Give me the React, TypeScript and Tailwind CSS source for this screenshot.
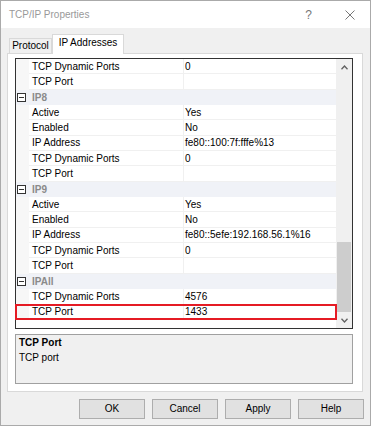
import React from "react";

type Row =
  | { kind: "cat"; label: string }
  | { kind: "prop"; name: string; value: string; marked?: boolean };

const rows: Row[] = [
  { kind: "prop", name: "TCP Dynamic Ports", value: "0" },
  { kind: "prop", name: "TCP Port", value: "" },
  { kind: "cat", label: "IP8" },
  { kind: "prop", name: "Active", value: "Yes" },
  { kind: "prop", name: "Enabled", value: "No" },
  { kind: "prop", name: "IP Address", value: "fe80::100:7f:fffe%13" },
  { kind: "prop", name: "TCP Dynamic Ports", value: "0" },
  { kind: "prop", name: "TCP Port", value: "" },
  { kind: "cat", label: "IP9" },
  { kind: "prop", name: "Active", value: "Yes" },
  { kind: "prop", name: "Enabled", value: "No" },
  { kind: "prop", name: "IP Address", value: "fe80::5efe:192.168.56.1%16" },
  { kind: "prop", name: "TCP Dynamic Ports", value: "0" },
  { kind: "prop", name: "TCP Port", value: "" },
  { kind: "cat", label: "IPAll" },
  { kind: "prop", name: "TCP Dynamic Ports", value: "4576" },
  { kind: "prop", name: "TCP Port", value: "1433", marked: true },
];

const Chevron = ({ up }: { up?: boolean }) => (
  <svg width="7" height="5" viewBox="0 0 7 5" fill="none" stroke="#606060" strokeWidth="1.3">
    {up ? <polyline points="0.5,4.2 3.5,1 6.5,4.2" /> : <polyline points="0.5,0.8 3.5,4 6.5,0.8" />}
  </svg>
);

// collapse box in the grid gutter
const MinusBox = () => (
  <div className="w-[9px] h-[9px] border border-[#333] bg-white flex items-center justify-center">
    <div className="w-[5px] h-[1px] bg-[#333]" />
  </div>
);

function GridRow({ row }: { row: Row }) {
  if (row.kind === "cat") {
    return (
      <div className="flex h-[15.35px] bg-[#f0f2f7] items-center">
        <div className="w-[13px] pl-[1px] flex items-center">
          <MinusBox />
        </div>
        <div className="pl-[3px] pt-[1px] font-bold text-[#8a8a8a]">{row.label}</div>
      </div>
    );
  }
  return (
    <div className="relative flex h-[15.35px] bg-white">
      <div className="w-[13px] bg-[#f7f7f7]" />
      <div className="w-[154px] flex items-center pl-[3px] pt-[1px] border-b border-[#f0f0f0]">{row.name}</div>
      <div className="w-[153px] flex items-center pl-[1px] pt-[1px] border-l border-b border-[#f0f0f0]">{row.value}</div>
      {row.marked && (
        <div className="absolute -left-[1px] -top-[1px] -right-[1px] bottom-0 border-2 border-[#e51b24]" />
      )}
    </div>
  );
}

export default function App() {
  return (
    <div className="w-[371px] h-[426px] bg-[#f0f0f0] border border-[#aaaaaa] flex flex-col text-[10px] leading-none text-black font-['Liberation_Sans',Arial,sans-serif]">
      {/* Title bar */}
      <div className="h-[27px] shrink-0 bg-white flex items-center pl-2">
        <span className="text-[#999999]">TCP/IP Properties</span>
        <span className="ml-auto text-[12px] text-[#777]">?</span>
        <svg className="ml-[33px] mr-[15px]" width="10" height="10" viewBox="0 0 10 10" stroke="#777" strokeWidth="1">
          <line x1="0.5" y1="0.5" x2="9.5" y2="9.5" />
          <line x1="9.5" y1="0.5" x2="0.5" y2="9.5" />
        </svg>
      </div>

      <div className="flex flex-col pt-[6px] pl-[6px] pr-[7px]">
        {/* Tabs */}
        <div className="flex items-end h-[19px] pl-[2px]">
          <div className="w-[43px] h-[15px] flex items-center justify-center bg-[#f0f0f0] border border-b-0 border-[#d9d9d9]">
            Protocol
          </div>
          <div className="relative z-10 -mb-[1px] w-[72px] h-[20px] flex items-center justify-center pb-[3px] bg-white border border-b-0 border-[#d9d9d9]">
            IP Addresses
          </div>
        </div>

        {/* Tab page */}
        <div className="h-[339px] bg-white border border-[#d9d9d9] pt-[4px] pl-[7px] pr-[9px] pb-[7px] flex flex-col">
          <div className="h-[271px] border border-[#333] flex">
            <div className="w-[320px] flex flex-col">
              {rows.map((r, i) => (
                <GridRow key={i} row={r} />
              ))}
            </div>
            <div className="w-[16px] bg-[#f0f0f0] flex flex-col">
              <div className="h-[16px] flex items-center justify-center">
                <Chevron up />
              </div>
              <div className="flex-1 flex flex-col justify-end">
                <div className="h-[70px] mx-[1px] bg-[#cdcdcd]" />
              </div>
              <div className="h-[16px] flex items-center justify-center">
                <Chevron />
              </div>
            </div>
          </div>

          {/* Description */}
          <div className="mt-[5px] h-[50px] bg-[#f0f0f0] border border-[#a0a0a0] pl-[3px] leading-[15px]">
            <div className="font-bold">TCP Port</div>
            <div>TCP port</div>
          </div>
        </div>
      </div>

      {/* Buttons */}
      <div className="mt-[7px] flex justify-end gap-[7px] pr-[6px]">
        {["OK", "Cancel", "Apply", "Help"].map((b) => (
          <button
            key={b}
            className="w-[66px] h-[20px] bg-[#e1e1e1] border border-[#adadad] flex items-center justify-center"
          >
            {b}
          </button>
        ))}
      </div>
    </div>
  );
}
